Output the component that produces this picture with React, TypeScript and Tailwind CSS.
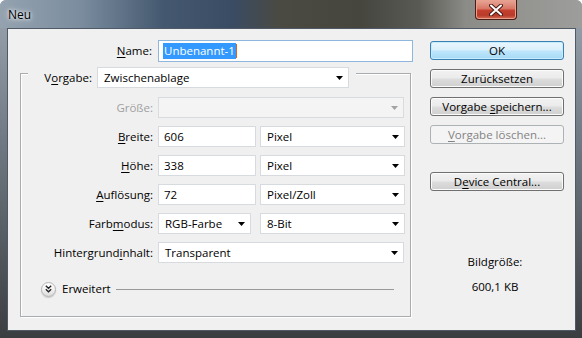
import React from 'react';

const Arrow = ({ disabled = false }: { disabled?: boolean }) => (
  <svg width="7" height="4" viewBox="0 0 7 4" className="shrink-0">
    <path d="M0 0h7L3.5 4z" fill={disabled ? '#a3a3a3' : '#000'} />
  </svg>
);

const Combo = ({ text, className = '', disabled = false }: { text?: string; className?: string; disabled?: boolean }) => (
  <div
    className={`flex h-[21px] items-center justify-between border pl-[6px] pr-[5px] ${
      disabled ? 'border-[#d9dcdf] bg-[#f4f4f4]' : 'border-[#d7dbe0] bg-white'
    } ${className}`}
  >
    <span>{text}</span>
    <Arrow disabled={disabled} />
  </div>
);

const Field = ({ text, className = '' }: { text: string; className?: string }) => (
  <div className={`flex h-[21px] items-center border border-[#d7dbe0] bg-white pl-[5px] ${className}`}>{text}</div>
);

const Key = ({ children }: { children: React.ReactNode }) => (
  <span className="underline decoration-1 underline-offset-[2px]">{children}</span>
);

const Row = ({ label, children }: { label: React.ReactNode; children: React.ReactNode }) => (
  <div className="flex h-[21px] items-center">
    <div className="w-[137px] shrink-0 pr-[5px] text-right">{label}</div>
    {children}
  </div>
);

const Button = ({ children, kind = 'normal' }: { children: React.ReactNode; kind?: 'normal' | 'default' | 'disabled' }) => {
  const look =
    kind === 'default'
      ? 'border-[#3c7fb1] bg-[linear-gradient(to_bottom,#eaf6fd_0%,#d9f0fc_48%,#bee6fd_52%,#a7d9f5_100%)] shadow-[inset_0_0_0_1px_#c4ecfc]'
      : kind === 'disabled'
      ? 'border-[#adb2b5] bg-[#f4f4f4] text-[#838383]'
      : 'border-[#707070] bg-[linear-gradient(to_bottom,#f2f2f2_0%,#ebebeb_48%,#dddddd_52%,#cfcfcf_100%)] shadow-[inset_0_0_0_1px_#fbfbfb]';
  return (
    <div className={`flex h-[19px] w-[134px] items-center justify-center rounded-[3px] border ${look}`}>{children}</div>
  );
};

export default function App() {
  return (
    <div className="flex h-[338px] w-[582px] flex-col overflow-hidden rounded-t-[6px] bg-[linear-gradient(to_bottom,#9aa5af_0%,#6d7680_45%,#3b3e41_100%)] font-['Open_Sans',sans-serif] text-[11.5px] leading-none text-black">
      {/* title bar */}
      <div className="relative flex h-[28px] shrink-0 items-start justify-between bg-[linear-gradient(to_right,#95a3b0_0%,#7a8c9e_14%,#44586f_28%,#3a4c63_40%,#4a4a42_48%,#46463f_62%,#5a5a55_72%,#8b8b87_80%,#9d9d9b_100%)]">
        <span className="ml-[8px] mt-[9px] text-[12px] [text-shadow:0_0_6px_#ffffff,0_0_3px_#ffffff]">Neu</span>
        <div className="mr-[65px] flex h-[20px] w-[42px] items-center justify-center rounded-b-[4px] border border-t-0 border-[#4a1c16] bg-[linear-gradient(to_bottom,#e8a899_0%,#d97766_45%,#c4402f_55%,#b93a2a_80%,#d26e55_100%)] shadow-[inset_0_0_0_1px_#eaa08f]">
          <svg width="14" height="12" viewBox="0 0 14 12">
            <path d="M2 1.5L12 10.5M12 1.5L2 10.5" stroke="#4c1a14" strokeWidth="4" strokeLinecap="round" />
            <path d="M2 1.5L12 10.5M12 1.5L2 10.5" stroke="#ffffff" strokeWidth="2" strokeLinecap="round" />
          </svg>
        </div>
      </div>

      {/* client area */}
      <div className="ml-[7px] flex h-[303px] w-[569px] shrink-0 border border-[#4f5a66] bg-[#f0f0f0]">
        {/* left column */}
        <div className="flex w-[403px] shrink-0 flex-col pl-[12px] pt-[11px]">
          <div className="flex h-[22px] items-center">
            <div className="w-[138px] shrink-0 pr-[6px] text-right">
              <Key>N</Key>ame:
            </div>
            <div className="flex h-[22px] w-[255px] shrink-0 items-center border border-[#8fb6dc] bg-white pl-[4px]">
              <span className="bg-[#3399ff] px-[1px] py-[2px] text-white">Unbenannt-1</span>
              <span className="h-[14px] w-px bg-[#d9661a]" />
            </div>
          </div>

          <div className="mt-[11px] flex h-[244px] w-[391px] flex-col border border-[#a9acaf] shadow-[1px_1px_0_#ffffff,inset_1px_1px_0_#ffffff]">
            <div className="-mt-[7px] ml-[7px] flex w-fit items-center bg-[#f0f0f0] pr-[7px]">
              <div className="w-[69px] pr-[5px] text-right">
                V<Key>o</Key>rgabe:
              </div>
              <Combo text="Zwischenablage" className="w-[252px]" />
            </div>

            <div className="mt-[9px] flex flex-col gap-[8px]">
              <Row label={<span className="text-[#a0a0a0]">Größe:</span>}>
                <Combo disabled className="w-[246px]" />
              </Row>
              <Row label={<><Key>B</Key>reite:</>}>
                <Field text="606" className="w-[98px]" />
                <Combo text="Pixel" className="ml-[4px] w-[145px]" />
              </Row>
              <Row label={<><Key>H</Key>öhe:</>}>
                <Field text="338" className="w-[98px]" />
                <Combo text="Pixel" className="ml-[4px] w-[145px]" />
              </Row>
              <Row label={<><Key>A</Key>uflösung:</>}>
                <Field text="72" className="w-[98px]" />
                <Combo text="Pixel/Zoll" className="ml-[4px] w-[145px]" />
              </Row>
              <Row label={<>Farb<Key>m</Key>odus:</>}>
                <Combo text="RGB-Farbe" className="w-[93px]" />
                <Combo text="8-Bit" className="ml-[9px] w-[145px]" />
              </Row>
              <Row label={<>Hintergrund<Key>i</Key>nhalt:</>}>
                <Combo text="Transparent" className="w-[246px]" />
              </Row>
            </div>

            <div className="ml-[20px] mr-[16px] mt-[18px] flex h-[16px] items-center">
              <div className="flex h-[15px] w-[15px] items-center justify-center rounded-full border border-[#b4b4b4] bg-[linear-gradient(to_bottom,#ffffff_0%,#f2f2f2_50%,#dcdcdc_100%)] shadow-[0_1px_1px_#c8c8c8]">
                <svg width="7" height="8" viewBox="0 0 7 8">
                  <path d="M0.8 0.8L3.5 3.3L6.2 0.8M0.8 4.3L3.5 6.8L6.2 4.3" stroke="#222" strokeWidth="1.3" fill="none" />
                </svg>
              </div>
              <span className="ml-[6px]">Erweitert</span>
              <div className="ml-[5px] h-px flex-1 bg-[#9a9a9a]" />
            </div>
          </div>
        </div>

        {/* right column */}
        <div className="ml-[19px] flex w-[134px] shrink-0 flex-col pt-[12px]">
          <div className="flex flex-col gap-[9px]">
            <Button kind="default">OK</Button>
            <Button>Zurücksetzen</Button>
            <Button>
              Vorgabe&nbsp;<Key>s</Key>peichern...
            </Button>
            <Button kind="disabled">
              <Key>V</Key>orgabe löschen...
            </Button>
          </div>
          <div className="mt-[28px]">
            <Button>
              D<Key>e</Key>vice Central...
            </Button>
          </div>
          <div className="mt-[65px] flex flex-col items-center gap-[13px] pr-[4px]">
            <span>Bildgröße:</span>
            <span>600,1 KB</span>
          </div>
        </div>
      </div>
    </div>
  );
}
